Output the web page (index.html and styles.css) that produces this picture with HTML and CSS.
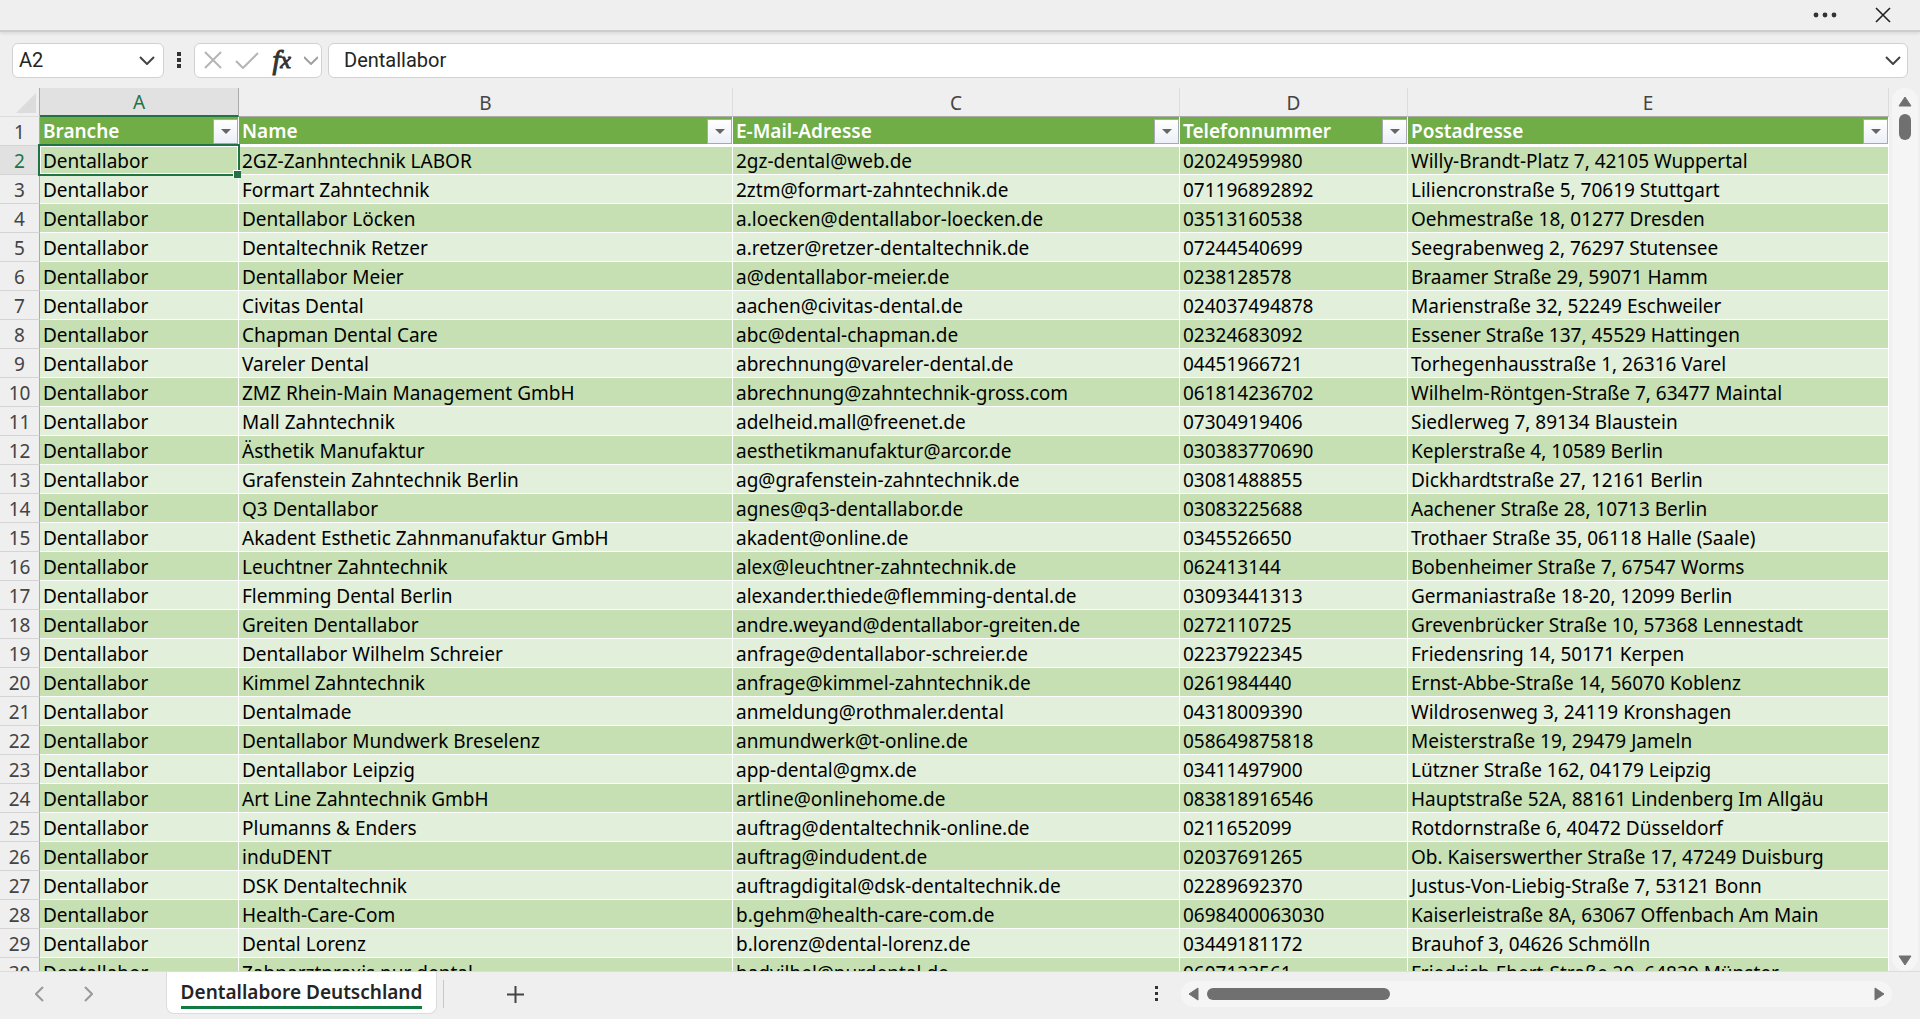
FILE: index.html
```html
<!DOCTYPE html>
<html lang="de">
<head>
<meta charset="UTF-8">
<meta name="viewport" content="width=device-width, initial-scale=1.0">
<title>Dentallabore Deutschland</title>
<link rel="stylesheet" href="styles.css">
</head>
<body>
<header class="topbar">
    <button class="icon-btn" aria-label="Mehr"><svg width="24" height="6" viewBox="0 0 24 6"><circle cx="3" cy="3" r="2.4"/><circle cx="12" cy="3" r="2.4"/><circle cx="21" cy="3" r="2.4"/></svg></button>
    <button class="icon-btn" aria-label="Schließen"><svg width="16" height="16" viewBox="0 0 16 16"><path d="M1 1l14 14M15 1L1 15" class="line dark"/></svg></button>
</header>

<div class="formula-bar">
    <div class="box name-box">
        <input type="text" value="A2" aria-label="Namenfeld">
        <button class="icon-btn" aria-label="Namen anzeigen"><svg width="16" height="9" viewBox="0 0 16 9"><path d="M1 1l7 7 7-7" class="line"/></svg></button>
    </div>
    <svg class="dots" width="4" height="16" viewBox="0 0 4 16"><path d="M0 0h4v4H0zM0 6h4v4H0zM0 12h4v4H0z"/></svg>
    <div class="box tools">
        <button class="icon-btn" aria-label="Abbrechen"><svg width="18" height="18" viewBox="0 0 18 18"><path d="M1 1l16 16M17 1L1 17" class="line pale"/></svg></button>
        <button class="icon-btn" aria-label="Eingeben"><svg width="24" height="17" viewBox="0 0 24 17"><path d="M1 9l7 7L23 1" class="line pale"/></svg></button>
        <button class="icon-btn fx" aria-label="Funktion einfügen"><i>f</i><i class="x">x</i></button>
        <button class="icon-btn" aria-label="Funktionen"><svg width="14" height="9" viewBox="0 0 14 9"><path d="M0 1l7 7 7-7" class="line grey"/></svg></button>
    </div>
    <div class="box formula">
        <input type="text" value="Dentallabor" aria-label="Bearbeitungsleiste">
        <button class="icon-btn" aria-label="Erweitern"><svg width="16" height="9" viewBox="0 0 16 9"><path d="M1 1l7 7 7-7" class="line"/></svg></button>
    </div>
</div>

<main class="workspace">
    <div class="grid">
        <table>
            <colgroup><col class="c-num"><col class="c-a"><col class="c-b"><col class="c-c"><col class="c-d"><col></colgroup>
            <thead>
                <tr class="letters"><th class="corner"><svg width="20" height="20" viewBox="0 0 20 20"><path d="M20 0v20H0z"/></svg></th><th class="active">A</th><th>B</th><th>C</th><th>D</th><th>E</th></tr>
            </thead>
            <tbody>
                <tr class="titles">
                    <th>1</th>
                    <td><div><span>Branche</span><button class="filter" aria-label="Branche filtern"></button></div></td>
                    <td><div><span>Name</span><button class="filter" aria-label="Name filtern"></button></div></td>
                    <td><div><span>E-Mail-Adresse</span><button class="filter" aria-label="E-Mail-Adresse filtern"></button></div></td>
                    <td><div><span>Telefonnummer</span><button class="filter" aria-label="Telefonnummer filtern"></button></div></td>
                    <td><div><span>Postadresse</span><button class="filter" aria-label="Postadresse filtern"></button></div></td>
                </tr>
                <tr class="first"><th class="active">2</th><td class="selected">Dentallabor</td><td>2GZ-Zanhntechnik LABOR</td><td>2gz-dental@web.de</td><td>02024959980</td><td>Willy-Brandt-Platz 7, 42105 Wuppertal</td></tr>
                <tr><th>3</th><td>Dentallabor</td><td>Formart Zahntechnik</td><td>2ztm@formart-zahntechnik.de</td><td>071196892892</td><td>Liliencronstraße 5, 70619 Stuttgart</td></tr>
                <tr><th>4</th><td>Dentallabor</td><td>Dentallabor Löcken</td><td>a.loecken@dentallabor-loecken.de</td><td>03513160538</td><td>Oehmestraße 18, 01277 Dresden</td></tr>
                <tr><th>5</th><td>Dentallabor</td><td>Dentaltechnik Retzer</td><td>a.retzer@retzer-dentaltechnik.de</td><td>07244540699</td><td>Seegrabenweg 2, 76297 Stutensee</td></tr>
                <tr><th>6</th><td>Dentallabor</td><td>Dentallabor Meier</td><td>a@dentallabor-meier.de</td><td>0238128578</td><td>Braamer Straße 29, 59071 Hamm</td></tr>
                <tr><th>7</th><td>Dentallabor</td><td>Civitas Dental</td><td>aachen@civitas-dental.de</td><td>024037494878</td><td>Marienstraße 32, 52249 Eschweiler</td></tr>
                <tr><th>8</th><td>Dentallabor</td><td>Chapman Dental Care</td><td>abc@dental-chapman.de</td><td>02324683092</td><td>Essener Straße 137, 45529 Hattingen</td></tr>
                <tr><th>9</th><td>Dentallabor</td><td>Vareler Dental</td><td>abrechnung@vareler-dental.de</td><td>04451966721</td><td>Torhegenhausstraße 1, 26316 Varel</td></tr>
                <tr><th>10</th><td>Dentallabor</td><td>ZMZ Rhein-Main Management GmbH</td><td>abrechnung@zahntechnik-gross.com</td><td>061814236702</td><td>Wilhelm-Röntgen-Straße 7, 63477 Maintal</td></tr>
                <tr><th>11</th><td>Dentallabor</td><td>Mall Zahntechnik</td><td>adelheid.mall@freenet.de</td><td>07304919406</td><td>Siedlerweg 7, 89134 Blaustein</td></tr>
                <tr><th>12</th><td>Dentallabor</td><td>Ästhetik Manufaktur</td><td>aesthetikmanufaktur@arcor.de</td><td>030383770690</td><td>Keplerstraße 4, 10589 Berlin</td></tr>
                <tr><th>13</th><td>Dentallabor</td><td>Grafenstein Zahntechnik Berlin</td><td>ag@grafenstein-zahntechnik.de</td><td>03081488855</td><td>Dickhardtstraße 27, 12161 Berlin</td></tr>
                <tr><th>14</th><td>Dentallabor</td><td>Q3 Dentallabor</td><td>agnes@q3-dentallabor.de</td><td>03083225688</td><td>Aachener Straße 28, 10713 Berlin</td></tr>
                <tr><th>15</th><td>Dentallabor</td><td>Akadent Esthetic Zahnmanufaktur GmbH</td><td>akadent@online.de</td><td>0345526650</td><td>Trothaer Straße 35, 06118 Halle (Saale)</td></tr>
                <tr><th>16</th><td>Dentallabor</td><td>Leuchtner Zahntechnik</td><td>alex@leuchtner-zahntechnik.de</td><td>062413144</td><td>Bobenheimer Straße 7, 67547 Worms</td></tr>
                <tr><th>17</th><td>Dentallabor</td><td>Flemming Dental Berlin</td><td>alexander.thiede@flemming-dental.de</td><td>03093441313</td><td>Germaniastraße 18-20, 12099 Berlin</td></tr>
                <tr><th>18</th><td>Dentallabor</td><td>Greiten Dentallabor</td><td>andre.weyand@dentallabor-greiten.de</td><td>0272110725</td><td>Grevenbrücker Straße 10, 57368 Lennestadt</td></tr>
                <tr><th>19</th><td>Dentallabor</td><td>Dentallabor Wilhelm Schreier</td><td>anfrage@dentallabor-schreier.de</td><td>02237922345</td><td>Friedensring 14, 50171 Kerpen</td></tr>
                <tr><th>20</th><td>Dentallabor</td><td>Kimmel Zahntechnik</td><td>anfrage@kimmel-zahntechnik.de</td><td>0261984440</td><td>Ernst-Abbe-Straße 14, 56070 Koblenz</td></tr>
                <tr><th>21</th><td>Dentallabor</td><td>Dentalmade</td><td>anmeldung@rothmaler.dental</td><td>04318009390</td><td>Wildrosenweg 3, 24119 Kronshagen</td></tr>
                <tr><th>22</th><td>Dentallabor</td><td>Dentallabor Mundwerk Breselenz</td><td>anmundwerk@t-online.de</td><td>058649875818</td><td>Meisterstraße 19, 29479 Jameln</td></tr>
                <tr><th>23</th><td>Dentallabor</td><td>Dentallabor Leipzig</td><td>app-dental@gmx.de</td><td>03411497900</td><td>Lützner Straße 162, 04179 Leipzig</td></tr>
                <tr><th>24</th><td>Dentallabor</td><td>Art Line Zahntechnik GmbH</td><td>artline@onlinehome.de</td><td>083818916546</td><td>Hauptstraße 52A, 88161 Lindenberg Im Allgäu</td></tr>
                <tr><th>25</th><td>Dentallabor</td><td>Plumanns &amp; Enders</td><td>auftrag@dentaltechnik-online.de</td><td>0211652099</td><td>Rotdornstraße 6, 40472 Düsseldorf</td></tr>
                <tr><th>26</th><td>Dentallabor</td><td>induDENT</td><td>auftrag@indudent.de</td><td>02037691265</td><td>Ob. Kaiserswerther Straße 17, 47249 Duisburg</td></tr>
                <tr><th>27</th><td>Dentallabor</td><td>DSK Dentaltechnik</td><td>auftragdigital@dsk-dentaltechnik.de</td><td>02289692370</td><td>Justus-Von-Liebig-Straße 7, 53121 Bonn</td></tr>
                <tr><th>28</th><td>Dentallabor</td><td>Health-Care-Com</td><td>b.gehm@health-care-com.de</td><td>0698400063030</td><td>Kaiserleistraße 8A, 63067 Offenbach Am Main</td></tr>
                <tr><th>29</th><td>Dentallabor</td><td>Dental Lorenz</td><td>b.lorenz@dental-lorenz.de</td><td>03449181172</td><td>Brauhof 3, 04626 Schmölln</td></tr>
                <tr><th>30</th><td>Dentallabor</td><td>Zahnarztpraxis pur dental</td><td>badvilbel@purdental.de</td><td>0607133561</td><td>Friedrich-Ebert-Straße 20, 64839 Münster</td></tr>
            </tbody>
        </table>
    </div>
    <div class="vscroll">
        <svg width="14" height="11" viewBox="0 0 14 11"><path d="M7 1l6 9H1z"/></svg>
        <div class="vthumb"></div>
        <svg class="end" width="14" height="11" viewBox="0 0 14 11"><path d="M7 10L1 1h12z"/></svg>
    </div>
</main>

<footer class="sheet-bar">
    <div class="sheet-nav">
        <button class="icon-btn" aria-label="Vorheriges Blatt"><svg width="9" height="16" viewBox="0 0 9 16"><path d="M8 1L1 8l7 7" class="line mid"/></svg></button>
        <button class="icon-btn" aria-label="Nächstes Blatt"><svg width="9" height="16" viewBox="0 0 9 16"><path d="M1 1l7 7-7 7" class="line mid"/></svg></button>
    </div>
    <button class="tab"><span>Dentallabore Deutschland</span></button>
    <button class="icon-btn add" aria-label="Neues Blatt"><svg width="17" height="17" viewBox="0 0 17 17"><path d="M8.500 0v17M0 8.500h17" class="line"/></svg></button>
    <svg class="dots" width="3" height="16" viewBox="0 0 3 16"><path d="M0 0h3v3H0zM0 6h3v3H0zM0 12h3v3H0z"/></svg>
    <div class="hscroll">
        <svg width="11" height="14" viewBox="0 0 11 14"><path d="M1 7l9-6v12z"/></svg>
        <div class="hthumb"></div>
        <svg class="end" width="11" height="14" viewBox="0 0 11 14"><path d="M10 7L1 1v12z"/></svg>
    </div>
</footer>
</body>
</html>
```
FILE: styles.css
```css
* {
    box-sizing: border-box;
}
body {
    margin: 0;
    height: 100vh;
    display: flex;
    flex-direction: column;
    overflow: hidden;
    background: #efefef;
    color: #000;
    font-family: "Noto Sans", sans-serif;
    font-size: 19px;
}
button, input {
    font: inherit;
    color: inherit;
    border: none;
    background: none;
    padding: 0;
    margin: 0;
}
input {
    flex: 1;
    min-width: 0;
    outline: none;
}
svg {
    display: block;
    fill: #333;
}
.line {
    fill: none;
    stroke: #444;
    stroke-width: 2;
}
.dark { stroke: #222; stroke-width: 1.6; }
.pale { stroke: #b5b5b5; }
.grey { stroke: #a0a0a0; }
.mid { stroke: #999; }
.icon-btn {
    display: flex;
    align-items: center;
    justify-content: center;
    flex: none;
}

/* window bar */
.topbar {
    height: 32px;
    flex: none;
    display: flex;
    align-items: center;
    justify-content: flex-end;
    gap: 38px;
    padding-right: 29px;
    border-bottom: 2px solid #cdcdcd;
    box-shadow: 0 1px 4px rgba(0, 0, 0, 0.12);
}

/* formula bar */
.formula-bar {
    height: 56px;
    flex: none;
    display: flex;
    align-items: center;
    padding: 0 12px;
    font-family: Roboto, sans-serif;
    font-size: 20px;
    color: #242424;
}
.box {
    height: 35px;
    display: flex;
    align-items: center;
    background: #fff;
    border: 1px solid #d1d1d1;
    border-radius: 6px;
}
.name-box {
    width: 152px;
    padding: 0 8px 0 6px;
}
.formula-bar .dots {
    margin: 0 13px;
}
.tools {
    width: 128px;
    justify-content: space-between;
    padding: 0 3px 0 9px;
}
.fx {
    font-family: "Liberation Serif", serif;
    font-size: 28px;
    line-height: 32px;
    color: #333;
    -webkit-text-stroke: 1px #333;
}
.fx .x {
    font-size: 24px;
}
.formula {
    flex: 1;
    margin-left: 6px;
    padding: 0 6px 0 15px;
}

/* grid */
.workspace {
    flex: 1;
    min-height: 0;
    display: flex;
}
.grid {
    flex: 1;
    min-width: 0;
    overflow: hidden;
}
table {
    width: 100%;
    table-layout: fixed;
    border-collapse: separate;
    border-spacing: 0;
}
.c-num { width: 40px; }
.c-a { width: 199px; }
.c-b { width: 494px; }
.c-c { width: 447px; }
.c-d { width: 228px; }
tr {
    height: 29px;
    line-height: 26px;
}
th, td {
    vertical-align: bottom;
}
td {
    padding: 0 0 0 3px;
    border-right: 1px solid #fff;
    border-bottom: 1px solid #fff;
    background: #c6e0b4;
    white-space: nowrap;
}
tbody tr:nth-child(odd) td {
    background: #e2efda;
}
th {
    padding: 0;
    font-weight: normal;
    color: #444;
}
tbody th {
    border-right: 1px solid #ababab;
    border-bottom: 1px solid #d4d4d4;
}
tbody th.active {
    background: #e1e1e1;
    color: #217346;
}
.letters th {
    border-right: 1px solid #dcdcdc;
    border-bottom: 1px solid #ababab;
}
.letters .active {
    background: #e1e1e1;
    color: #217346;
    border-right-color: #ababab;
    border-bottom: 2px solid #217346;
}
.letters .corner {
    border-right-color: #ababab;
    border-bottom-color: #dcdcdc;
}
.corner svg {
    margin: 0 3px 3px auto;
    fill: #dcdcdc;
}
tbody tr.titles td {
    background: #70ad47;
    border-bottom-width: 2px;
    color: #fff;
    font-weight: 600;
}
.titles div {
    display: flex;
    align-items: flex-end;
    justify-content: space-between;
}
.filter {
    width: 25px;
    height: 25px;
    display: flex;
    align-items: center;
    justify-content: center;
    background: linear-gradient(#fff, #eceff7);
    border: 1px solid #a6a9b0;
}
.filter::after {
    content: "";
    border: 5px solid transparent;
    border-top-color: #666;
    border-bottom: none;
}
.first td {
    border-top: 1px solid #fff;
}
.selected {
    position: relative;
}
/* selection frame and its fill handle */
.selected::before {
    content: "";
    position: absolute;
    inset: -3px -2px -2px -2px;
    border: 2px solid #217346;
    box-shadow: inset 0 0 0 1px #fff;
}
.selected::after {
    content: "";
    position: absolute;
    right: -3px;
    bottom: -4px;
    width: 7px;
    height: 7px;
    background: #217346;
    border-left: 1px solid #fff;
    border-top: 1px solid #fff;
}

/* scroll bars */
.vscroll, .hscroll {
    display: flex;
    align-items: center;
    background: #f5f5f5;
    border-radius: 13px;
}
.vscroll {
    width: 26px;
    margin: 0 2px 0 3px;
    padding: 8px 0 5px;
    flex-direction: column;
}
.vscroll svg, .hscroll svg {
    fill: #707070;
    stroke: #707070;
    stroke-linejoin: round;
}
.vthumb {
    width: 12px;
    height: 26px;
    margin-top: 7px;
    border-radius: 6px;
    background: #707070;
}
.vscroll .end {
    margin-top: auto;
}

/* sheet tabs */
.sheet-bar {
    height: 48px;
    flex: none;
    display: flex;
    align-items: center;
    padding: 0 28px 3px 0;
    border-top: 1px solid #dcdcdc;
}
.sheet-nav {
    width: 166px;
    display: flex;
    gap: 40px;
    padding-left: 35px;
}
.tab {
    align-self: flex-start;
    width: 271px;
    height: 42px;
    display: flex;
    justify-content: center;
    align-items: center;
    padding-top: 2px;
    background: #fff;
    border: 1px solid #dcdcdc;
    border-top: none;
    border-radius: 0 0 8px 8px;
    font-weight: 600;
    color: #242424;
}
.tab span {
    line-height: 28px;
    border-bottom: 3px solid #107c41;
}
.add {
    height: 28px;
    margin-left: 6px;
    padding-left: 63px;
    border-left: 1px solid #c8c8c8;
}
.sheet-bar .dots {
    margin: 0 23px 0 auto;
}
.hscroll {
    width: 711px;
    height: 26px;
    padding: 0 7px;
}
.hthumb {
    width: 183px;
    height: 12px;
    margin-left: 8px;
    border-radius: 6px;
    background: #707070;
}
.hscroll .end {
    margin-left: auto;
}
```
